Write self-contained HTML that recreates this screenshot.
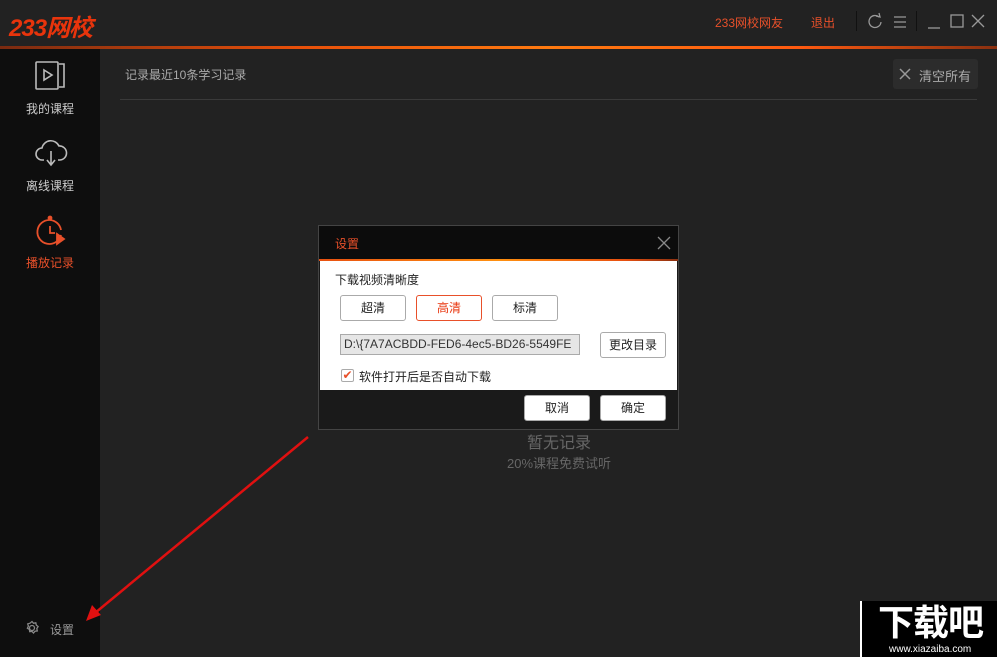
<!DOCTYPE html>
<html><head><meta charset="utf-8"><style>
*{margin:0;padding:0;box-sizing:border-box}
body{width:997px;height:657px;overflow:hidden;background:#222;font-family:"Liberation Sans","Noto Sans CJK SC",sans-serif;position:relative;color:#aaa}
.abs{position:absolute}
.top{left:0;top:0;width:997px;height:47px;background:#222}
.line{left:0;top:46px;width:997px;height:3px;background:linear-gradient(90deg,#7a2a10,#e8500a 30%,#ff7a10 55%,#ff5a10 80%,#8a3010)}
.side{left:0;top:49px;width:100px;height:608px;background:#0e0e0e}
.nav{width:100px;text-align:center;font-size:12px;color:#ccc}
.btn{position:absolute;background:#fff;border:1px solid #aaa;border-radius:3px;font-size:12px;color:#222;text-align:center;line-height:24px}
</style></head><body>
<div class="abs top"></div>
<div class="abs" style="left:9px;top:8px;font:italic bold 24px 'Liberation Sans','Noto Sans CJK SC',sans-serif;color:#e8340c;letter-spacing:-1px">233网校</div>
<div class="abs" style="left:715px;top:14px;font-size:12px;color:#e8502a">233网校网友</div>
<div class="abs" style="left:811px;top:14px;font-size:12px;color:#e8502a">退出</div>
<div class="abs" style="left:856px;top:11px;width:1px;height:20px;background:#111"></div>
<div class="abs" style="left:916px;top:11px;width:1px;height:20px;background:#111"></div>
<svg class="abs" style="left:864px;top:12px" width="130" height="20" viewBox="0 0 130 20" fill="none" stroke="#999" stroke-width="1.3">
<path d="M15 5 A6 6 0 1 0 17 10"/><path d="M12 4 L16 5 L15 1"/>
<path d="M30 5h12M30 10h12M30 15h12"/>
<path d="M64 16h12"/><rect x="87" y="3" width="12" height="12"/><path d="M108 3l12 12M120 3l-12 12"/>
</svg>
<div class="abs line"></div>
<div class="abs side"></div>
<svg class="abs" style="left:34px;top:60px" width="32" height="32" viewBox="0 0 32 32" fill="none" stroke="#bbb" stroke-width="1.6"><rect x="2" y="2" width="22" height="27" rx="1"/><path d="M25 4h5v23h-5"/><path d="M10 10l8 5-8 5z"/></svg>
<div class="abs nav" style="top:100px">我的课程</div>
<svg class="abs" style="left:34px;top:138px" width="34" height="30" viewBox="0 0 34 30" fill="none" stroke="#bbb" stroke-width="1.6"><path d="M10 22H8a6 6 0 0 1 0-12 9 9 0 0 1 17-2 7 7 0 0 1 1 14h-2"/><path d="M17 13v13M13 22l4 5 4-5"/></svg>
<div class="abs nav" style="top:177px">离线课程</div>
<svg class="abs" style="left:35px;top:215px" width="32" height="32" viewBox="0 0 32 32" fill="none" stroke="#e8502a" stroke-width="1.8"><path d="M26 20A12 12 0 1 1 15 5"/><path d="M15 5a12 12 0 0 1 11 10"/><circle cx="15" cy="3" r="1.5" fill="#e8502a"/><path d="M15 11v7h5"/><path d="M22 19l7 5-7 5z" fill="#e8502a"/></svg>
<div class="abs nav" style="top:254px;color:#e8502a">播放记录</div>
<svg class="abs" style="left:24px;top:620px" width="16" height="16" viewBox="0 0 16 16" fill="none" stroke="#888" stroke-width="1.3"><circle cx="8" cy="8" r="2.5"/><path d="M8 1.5l1.5 1.8 2.3-.5.5 2.3 1.8 1.5-1.3 2 .5 2.3-2.3.3-1.5 1.8-1.5-1.6-2.3.3-.3-2.3-2-1.2 1-2.1-.7-2.2 2.3-.7z"/></svg>
<div class="abs" style="left:50px;top:621px;font-size:12px;color:#999">设置</div>
<div class="abs" style="left:125px;top:66px;font-size:12px;color:#aaa">记录最近10条学习记录</div>
<div class="abs" style="left:120px;top:99px;width:857px;height:1px;background:#3a3a3a"></div>
<div class="abs" style="left:893px;top:59px;width:85px;height:30px;background:#2c2c2c;border-radius:3px"></div>
<svg class="abs" style="left:899px;top:68px" width="12" height="12" fill="none" stroke="#999" stroke-width="1.5"><path d="M1 1l10 10M11 1L1 11"/></svg>
<div class="abs" style="left:919px;top:66px;font-size:13px;color:#aaa">清空所有</div>
<div class="abs" style="left:527px;top:429px;font-size:16px;color:#666">暂无记录</div>
<div class="abs" style="left:507px;top:453px;font-size:13px;color:#666">20%课程免费试听</div>
<div class="abs" style="left:318px;top:225px;width:361px;height:205px;background:#1a1a1a;border:1px solid #444"></div>
<div class="abs" style="left:319px;top:226px;width:359px;height:33px;background:#0c0c0c"></div>
<div class="abs" style="left:335px;top:235px;font-size:12px;color:#e8502a">设置</div>
<svg class="abs" style="left:657px;top:236px" width="14" height="14" fill="none" stroke="#888" stroke-width="1.3"><path d="M1 1l12 12M13 1L1 13"/></svg>
<div class="abs" style="left:319px;top:259px;width:359px;height:2px;background:linear-gradient(90deg,#e85010,#ff9010 50%,#e85010 85%,#8a3010)"></div>
<div class="abs" style="left:320px;top:261px;width:357px;height:129px;background:#fff"></div>
<div class="abs" style="left:335px;top:271px;font-size:12px;color:#222">下载视频清晰度</div>
<div class="btn" style="left:340px;top:295px;width:66px;height:26px">超清</div>
<div class="btn" style="left:416px;top:295px;width:66px;height:26px;border-color:#e8502a;color:#e8340c">高清</div>
<div class="btn" style="left:492px;top:295px;width:66px;height:26px">标清</div>
<div class="abs" style="left:340px;top:334px;width:240px;height:21px;background:#e6e6e6;border:1px solid #aaa;font-size:12px;color:#333;line-height:19px;padding-left:3px;overflow:hidden;white-space:nowrap">D:\{7A7ACBDD-FED6-4ec5-BD26-5549FE</div>
<div class="btn" style="left:600px;top:332px;width:66px;height:26px">更改目录</div>
<div class="abs" style="left:341px;top:369px;width:13px;height:13px;border:1px solid #aaa;border-radius:2px;color:#e8502a;font-size:12px;line-height:11px;text-align:center">✔</div>
<div class="abs" style="left:359px;top:368px;font-size:12px;color:#222">软件打开后是否自动下载</div>
<div class="btn" style="left:524px;top:395px;width:66px;height:26px">取消</div>
<div class="btn" style="left:600px;top:395px;width:66px;height:26px">确定</div>
<svg class="abs" style="left:0;top:0;pointer-events:none" width="997" height="657"><path d="M308 437L95 613" stroke="#e01010" stroke-width="2.5"/><path d="M86 621l6-16 9 10z" fill="#e01010"/></svg>
<div class="abs" style="left:860px;top:601px;width:137px;height:56px;background:#000;border-left:2px solid #fff"></div>
<div class="abs" style="left:864px;top:598px;width:133px;text-align:center;font:bold 36px 'Noto Sans CJK SC',sans-serif;color:#fff;line-height:44px;letter-spacing:-1px">下载吧</div>
<div class="abs" style="left:889px;top:644px;font-size:10px;color:#fff">www.xiazaiba.com</div>
</body></html>
